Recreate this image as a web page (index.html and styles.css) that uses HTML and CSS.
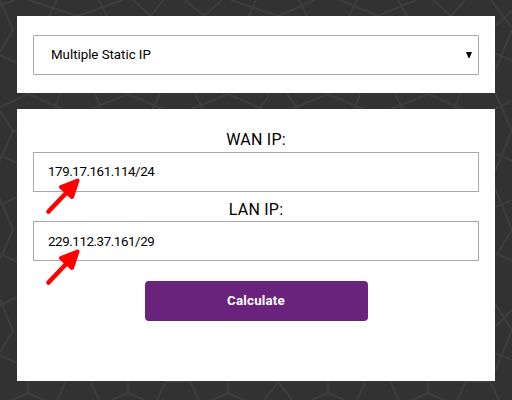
FILE: index.html
```html
<!DOCTYPE html>
<html lang="en">
<head>
<meta charset="utf-8">
<title>IP Calculator</title>
<link rel="stylesheet" href="styles.css">
</head>
<body>
<svg class="pattern" viewBox="0 0 512 400" aria-hidden="true">
<path d="M0 5L15 0M0 0L13 30L0 52M28 0L78 16L123 0M57 0L49 16M99 0L107 16M133 0L151 16L163 0M185 0L204 16L222 0M231 0L278 16L315 0M256 0L249 16M299 0L307 16M340 0L378 16L416 0M357 0L349 16M398 0L407 16M433 0L451 16L465 0M491 0L512 28"/>
<path d="M0 107L28 94L63 109M60 94L54 109M91 109L128 94L163 109M95 94L102 109M160 94L153 109M192 109L228 94L262 109M195 94L203 109M270 94L259 109M287 94L298 109M291 109L328 94L363 109M360 94L354 109M395 94L403 109M391 109L428 94L463 109M460 94L454 109"/>
<path d="M28 381V393M12 400L28 393L44 400M128 381V393M112 400L128 393L144 400M228 381V393M212 400L228 393L244 400M328 381V393M312 400L328 393L344 400M428 381V393M412 400L428 393L444 400M66 381L57 400M90 381L99 400M157 400L166 381.500H190L199 400M264 400L278 382L292 400M366 381L357 400M390 381L399 400M457 400L466 381.500H490L499 400"/>
<path d="M0 55L17 63M0 111L13 131L2 156M0 155L17 163M13 131H17M2 156L0 161M0 199L13 230L2 255M0 205L17 197M0 254L17 262M2 255L0 259M0 299L13 331L0 352M0 305L17 297M0 355L17 363"/>
<path d="M495 26L512 11M512 30L495 71M495 53L512 61M495 92L512 131L495 171M495 109L512 101M495 153L512 161M495 188L512 230L497 254L512 261M495 207L512 200M495 304L512 330L495 371M495 327L512 310M495 353L512 360"/>
</svg>
<main class="page">
<section class="panel">
<div class="field select"><span>Multiple Static IP</span><svg class="caret" viewBox="0 0 6 6"><path d="M0 0H6L3.500 6H2.500Z"/></svg></div>
</section>
<form class="panel calculator">
<label class="label" for="wan">WAN IP:</label>
<input class="field wan" id="wan" value="179.17.161.114/24">
<label class="label second" for="lan">LAN IP:</label>
<input class="field" id="lan" value="229.112.37.161/29">
<button class="button" type="button">Calculate</button>
</form>
</main>
<svg class="arrow" viewBox="0 0 36 38"><path class="shaft" d="M4.500 33.500L24 13"/><path class="head" d="M33.500 2.500L17 9L28 19Z"/></svg>
<svg class="arrow lower" viewBox="0 0 36 38"><path class="shaft" d="M4.500 33.500L24 13"/><path class="head" d="M33.500 2.500L17 9L28 19Z"/></svg>
</body>
</html>
```
FILE: styles.css
```css
* { box-sizing: border-box; }
body {
  margin: 0;
  height: 400px;
  overflow: hidden;
  background: #323232;
  color: #000;
  font-family: Roboto, "Liberation Sans", sans-serif;
}
.pattern {
  position: absolute;
  inset: 0;
  width: 512px;
  height: 400px;
  fill: none;
  stroke: #3d3d3d;
  stroke-width: 2;
}
.page {
  position: relative;
  display: flex;
  flex-direction: column;
  gap: 16px;
  padding: 16px 17px 0;
}
.panel { background: #fff; padding: 19px 16px 18px; }
.calculator {
  display: flex;
  flex-direction: column;
  height: 272px;
  padding: 20px 16px 0;
}
.field {
  display: block;
  width: 100%;
  height: 40px;
  padding: 0 14px;
  border: 1px solid #a9a9a9;
  border-radius: 0;
  background: #fff;
  color: #000;
  font: 13.33px Roboto, sans-serif;
  letter-spacing: -0.42px;
}
.wan { padding-bottom: 2px; }
.select {
  display: flex;
  align-items: center;
  justify-content: space-between;
  padding: 0 6px 2px 17px;
  border-radius: 1px;
  letter-spacing: -0.03px;
}
.caret { width: 6px; height: 6px; margin-top: 1px; }
.label {
  height: 23px;
  font-size: 16px;
  line-height: 21px;
  letter-spacing: 0.25px;
  text-align: center;
}
.second { height: 29px; line-height: 35px; }
.button {
  align-self: center;
  width: 223px;
  height: 40px;
  margin-top: 20px;
  padding: 0 0 2px;
  border: 0;
  border-radius: 4px;
  background: #6a237d;
  color: #fff;
  font: bold 13.33px Roboto, sans-serif;
  letter-spacing: 0.2px;
}
.arrow {
  position: absolute;
  left: 44px;
  top: 178px;
  width: 36px;
  height: 38px;
}
.lower { top: 249px; }
.shaft { stroke: #f00; stroke-width: 4.6; stroke-linecap: round; }
.head { fill: #f00; stroke: #f00; stroke-width: 4; stroke-linejoin: round; }
```
